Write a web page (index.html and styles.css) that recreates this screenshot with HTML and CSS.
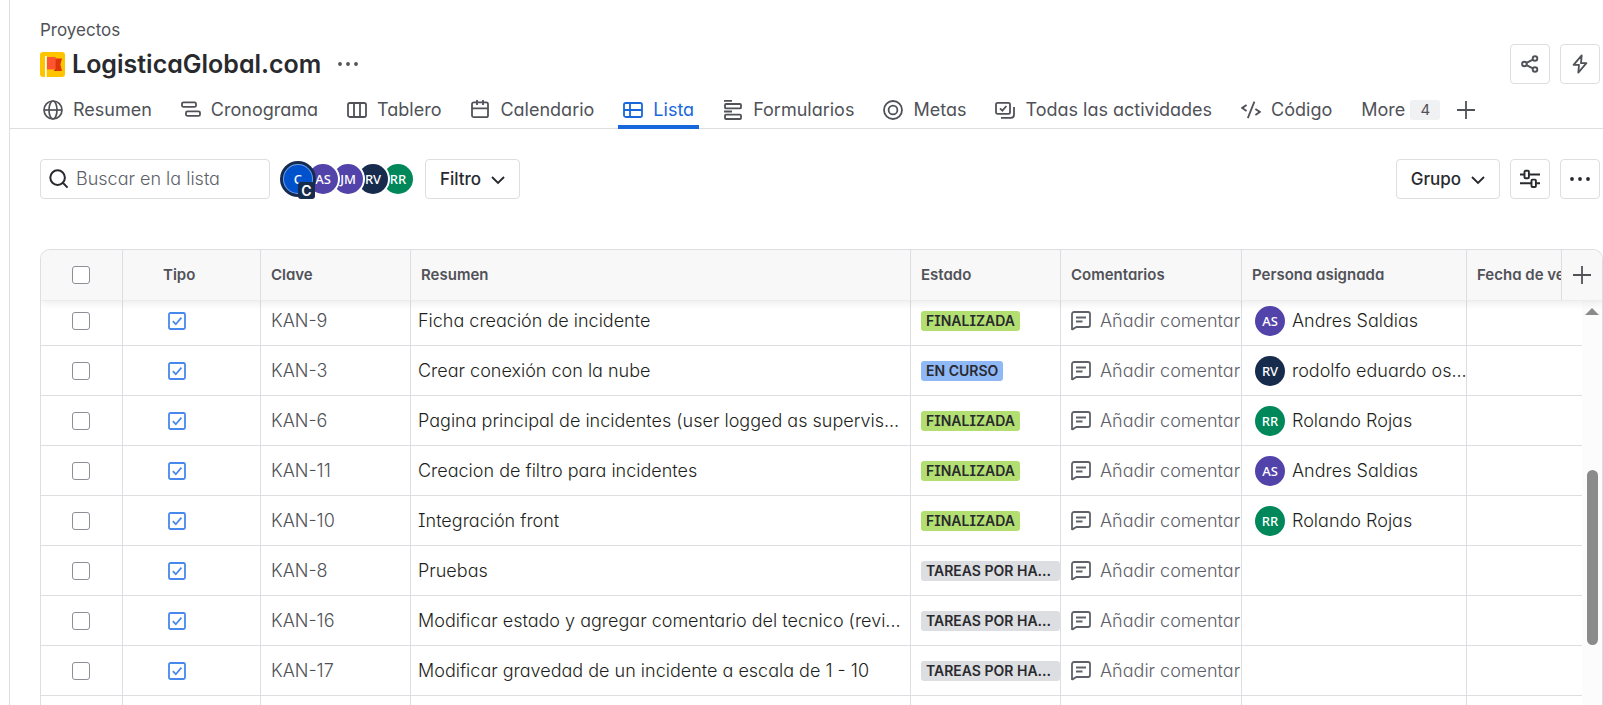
FILE: index.html
```html
<!DOCTYPE html>
<html lang="es">
<head>
<meta charset="utf-8">
<title>LogisticaGlobal.com - Lista</title>
<link rel="stylesheet" href="styles.css">
</head>
<body>
<svg class="sprite" aria-hidden="true">
  <symbol id="i-task" viewBox="0 0 18 18"><rect x="1" y="1" width="16" height="16" rx="1.5" fill="none" stroke="currentColor" stroke-width="1.8"/><path d="M4.8 9.2l3 3 5.6-6.6" fill="none" stroke="currentColor" stroke-width="1.7"/></symbol>
  <symbol id="i-comment" viewBox="0 0 20 20"><path d="M1 19V3a2 2 0 0 1 2-2h14a2 2 0 0 1 2 2v11a2 2 0 0 1-2 2H5.5L1 18.6zM5 6.5h10M5 10.5h6.5" fill="none" stroke="currentColor" stroke-width="1.8"/></symbol>
  <symbol id="i-plus" viewBox="0 0 20 20"><path d="M10 1v18M1 10h18" fill="none" stroke="currentColor" stroke-width="1.8"/></symbol>
  <symbol id="i-dots" viewBox="0 0 20 20"><g fill="currentColor"><circle cx="2" cy="10" r="1.9"/><circle cx="10" cy="10" r="1.9"/><circle cx="18" cy="10" r="1.9"/></g></symbol>
  <symbol id="i-chevron" viewBox="0 0 14 14"><path d="M1 5l6 6 6-6" fill="none" stroke="currentColor" stroke-width="1.9"/></symbol>
</svg>
<div class="edge"></div>
<main class="page">
  <header class="head">
    <a class="crumb" href="#">Proyectos</a>
    <div class="title-row">
      <svg class="logo" viewBox="0 0 25 25" aria-hidden="true"><rect width="25" height="25" rx="3" fill="#ffc400"/><path d="M5 4h1.7v21H5z" fill="#fff"/><path d="M15 6.5h7l-1.6 6 1.6 6.5h-7z" fill="#de350b"/><path d="M7 5h8.6v12.4H7z" fill="#ff5630"/><path d="M15.6 17.4L13.4 19h2.2z" fill="#bf2600"/></svg>
      <h1>LogisticaGlobal.com</h1>
      <button class="bare" aria-label="Más acciones"><svg class="ic"><use href="#i-dots"/></svg></button>
      <div class="actions">
        <button class="btn icon soft" aria-label="Compartir"><svg class="ic" viewBox="0 0 20 20"><g fill="none" stroke="currentColor" stroke-width="1.9"><circle cx="4.4" cy="10" r="2.3"/><circle cx="15" cy="4.5" r="2.3"/><circle cx="15" cy="15.5" r="2.3"/><path d="M6.5 8.9l6.4-3.3M6.5 11.1l6.4 3.3"/></g></svg></button>
        <button class="btn icon soft" aria-label="Automatización"><svg class="ic" viewBox="0 0 20 20"><path d="M11.7 1.3L3.6 10.8H9l-.7 7.9 8.1-9.5H11z" fill="none" stroke="currentColor" stroke-width="1.8" stroke-linejoin="round"/></svg></button>
      </div>
    </div>
  </header>
  <nav class="tabs">
    <a class="tab" href="#"><svg class="ic" viewBox="0 0 20 20"><g fill="none" stroke="currentColor" stroke-width="1.7"><circle cx="10" cy="10" r="9"/><ellipse cx="10" cy="10" rx="4" ry="9"/><path d="M1 10h18"/></g></svg>Resumen</a>
    <a class="tab" href="#"><svg class="ic" viewBox="0 0 20 20"><g fill="none" stroke="currentColor" stroke-width="1.8"><rect x="1" y="2.3" width="14" height="4.6" rx="1.5"/><rect x="5" y="11.3" width="14" height="4.6" rx="1.5"/></g></svg>Cronograma</a>
    <a class="tab" href="#"><svg class="ic" viewBox="0 0 20 20"><g fill="none" stroke="currentColor" stroke-width="1.8"><rect x="1" y="3" width="18" height="14" rx="1.8"/><path d="M7 3v14M13 3v14"/></g></svg>Tablero</a>
    <a class="tab" href="#"><svg class="ic" viewBox="0 0 20 20"><g fill="none" stroke="currentColor" stroke-width="1.8"><rect x="2" y="2.4" width="16" height="14.8" rx="1.8"/><path d="M2 8.3h16M7 0v5M13 0v5"/></g></svg>Calendario</a>
    <a class="tab active" href="#" aria-current="page"><svg class="ic" viewBox="0 0 20 20"><g fill="none" stroke="currentColor" stroke-width="1.8"><rect x="1" y="3" width="18" height="14" rx="1.8"/><path d="M7 3v14M1 10h18"/></g></svg>Lista</a>
    <a class="tab" href="#"><svg class="ic" viewBox="0 0 20 20"><g fill="none" stroke="currentColor" stroke-width="1.8"><rect x="2" y="4" width="16" height="4.4" rx="1"/><rect x="2" y="14.6" width="16" height="4.4" rx="1"/><path d="M1 .9h8M1 11.5h8"/></g></svg>Formularios</a>
    <a class="tab" href="#"><svg class="ic" viewBox="0 0 20 20"><g fill="none" stroke="currentColor" stroke-width="1.8"><circle cx="10" cy="10" r="9"/><circle cx="10" cy="10" r="4.4"/></g></svg>Metas</a>
    <a class="tab" href="#"><svg class="ic" viewBox="0 0 20 20"><g fill="none" stroke="currentColor" stroke-width="1.8"><rect x="1" y="2.9" width="14" height="11" rx="1.6"/><path d="M5 8.3l2.4 2.4L11.4 6M19 7v7.8a3 3 0 0 1-3 3H6"/></g></svg>Todas las actividades</a>
    <a class="tab" href="#"><svg class="ic" viewBox="0 0 20 20"><path d="M5.6 5L1.2 7.9l4.4 3M14.4 9l4.4 2.9-4.4 3M13.4 1.6L6.8 18.2" fill="none" stroke="currentColor" stroke-width="1.8"/></svg>Código</a>
    <button class="tab more">More <span class="count">4</span></button>
    <button class="bare add" aria-label="Añadir vista"><svg class="ic"><use href="#i-plus"/></svg></button>
  </nav>
  <section class="toolbar">
    <label class="search"><svg class="ic" viewBox="0 0 20 20"><g fill="none" stroke="currentColor" stroke-width="2"><circle cx="8.6" cy="8.6" r="7.3"/><path d="M13.8 13.8l4.8 4.8"/></g></svg><input type="text" placeholder="Buscar en la lista" aria-label="Buscar en la lista"></label>
    <div class="people">
      <button class="avatar blue selected">C<span class="mark">C</span></button>
      <button class="avatar purple">AS</button>
      <button class="avatar purple">JM</button>
      <button class="avatar navy">RV</button>
      <button class="avatar green">RR</button>
    </div>
    <button class="btn">Filtro <svg class="chev"><use href="#i-chevron"/></svg></button>
    <div class="actions">
      <button class="btn">Grupo <svg class="chev"><use href="#i-chevron"/></svg></button>
      <button class="btn icon" aria-label="Ajustes de vista"><svg class="ic" viewBox="0 0 20 20"><g fill="none" stroke="currentColor" stroke-width="1.9"><rect x="4.5" y="1.8" width="4.4" height="7.4" rx="1"/><rect x="11.5" y="10.6" width="4.4" height="7.4" rx="1"/><path d="M0 5.5h4M9.4 5.5H20M0 14.3h11M16.4 14.3H20"/></g></svg></button>
      <button class="btn icon" aria-label="Más opciones"><svg class="ic"><use href="#i-dots"/></svg></button>
    </div>
  </section>
  <section class="list">
    <table>
      <colgroup><col class="c-check"><col class="c-type"><col class="c-key"><col><col class="c-state"><col class="c-comment"><col class="c-person"><col class="c-date"><col class="c-add"></colgroup>
      <thead>
        <tr><th class="check"><input type="checkbox" aria-label="Seleccionar todo"></th><th class="type">Tipo</th><th>Clave</th><th>Resumen</th><th>Estado</th><th>Comentarios</th><th>Persona asignada</th><th>Fecha de ve</th><th class="new"><button class="bare" aria-label="Añadir columna"><svg class="ic"><use href="#i-plus"/></svg></button></th></tr>
      </thead>
      <tbody>
        <tr><td class="check"><input type="checkbox" aria-label="KAN-9"></td><td class="type"><svg class="task"><use href="#i-task"/></svg></td><td class="key">KAN-9</td><td class="sum">Ficha creación de incidente</td><td class="state"><span class="tag done">FINALIZADA</span></td><td class="note"><div><svg class="ic"><use href="#i-comment"/></svg>Añadir comentar</div></td><td class="who"><div><span class="avatar purple">AS</span><span class="name">Andres Saldias</span></div></td><td colspan="2"></td></tr>
        <tr><td class="check"><input type="checkbox" aria-label="KAN-3"></td><td class="type"><svg class="task"><use href="#i-task"/></svg></td><td class="key">KAN-3</td><td class="sum">Crear conexión con la nube</td><td class="state"><span class="tag doing">EN CURSO</span></td><td class="note"><div><svg class="ic"><use href="#i-comment"/></svg>Añadir comentar</div></td><td class="who"><div><span class="avatar navy">RV</span><span class="name">rodolfo eduardo os...</span></div></td><td colspan="2"></td></tr>
        <tr><td class="check"><input type="checkbox" aria-label="KAN-6"></td><td class="type"><svg class="task"><use href="#i-task"/></svg></td><td class="key">KAN-6</td><td class="sum">Pagina principal de incidentes (user logged as supervis...</td><td class="state"><span class="tag done">FINALIZADA</span></td><td class="note"><div><svg class="ic"><use href="#i-comment"/></svg>Añadir comentar</div></td><td class="who"><div><span class="avatar green">RR</span><span class="name">Rolando Rojas</span></div></td><td colspan="2"></td></tr>
        <tr><td class="check"><input type="checkbox" aria-label="KAN-11"></td><td class="type"><svg class="task"><use href="#i-task"/></svg></td><td class="key">KAN-11</td><td class="sum">Creacion de filtro para incidentes</td><td class="state"><span class="tag done">FINALIZADA</span></td><td class="note"><div><svg class="ic"><use href="#i-comment"/></svg>Añadir comentar</div></td><td class="who"><div><span class="avatar purple">AS</span><span class="name">Andres Saldias</span></div></td><td colspan="2"></td></tr>
        <tr><td class="check"><input type="checkbox" aria-label="KAN-10"></td><td class="type"><svg class="task"><use href="#i-task"/></svg></td><td class="key">KAN-10</td><td class="sum">Integración front</td><td class="state"><span class="tag done">FINALIZADA</span></td><td class="note"><div><svg class="ic"><use href="#i-comment"/></svg>Añadir comentar</div></td><td class="who"><div><span class="avatar green">RR</span><span class="name">Rolando Rojas</span></div></td><td colspan="2"></td></tr>
        <tr><td class="check"><input type="checkbox" aria-label="KAN-8"></td><td class="type"><svg class="task"><use href="#i-task"/></svg></td><td class="key">KAN-8</td><td class="sum">Pruebas</td><td class="state"><span class="tag todo">TAREAS POR HA...</span></td><td class="note"><div><svg class="ic"><use href="#i-comment"/></svg>Añadir comentar</div></td><td></td><td colspan="2"></td></tr>
        <tr><td class="check"><input type="checkbox" aria-label="KAN-16"></td><td class="type"><svg class="task"><use href="#i-task"/></svg></td><td class="key">KAN-16</td><td class="sum">Modificar estado y agregar comentario del tecnico (revi...</td><td class="state"><span class="tag todo">TAREAS POR HA...</span></td><td class="note"><div><svg class="ic"><use href="#i-comment"/></svg>Añadir comentar</div></td><td></td><td colspan="2"></td></tr>
        <tr><td class="check"><input type="checkbox" aria-label="KAN-17"></td><td class="type"><svg class="task"><use href="#i-task"/></svg></td><td class="key">KAN-17</td><td class="sum">Modificar gravedad de un incidente a escala de 1 - 10</td><td class="state"><span class="tag todo">TAREAS POR HA...</span></td><td class="note"><div><svg class="ic"><use href="#i-comment"/></svg>Añadir comentar</div></td><td></td><td colspan="2"></td></tr>
        <tr><td></td><td></td><td></td><td></td><td></td><td></td><td></td><td colspan="2"></td></tr>
      </tbody>
    </table>
    <div class="scrollbar" aria-hidden="true"><svg class="arrow" viewBox="0 0 14 7"><path d="M7 0l7 7H0z" fill="#8b8b8b"/></svg><div class="thumb"></div></div>
  </section>
</main>
</body>
</html>
```
FILE: styles.css
```css
* { box-sizing: border-box; }

body {
  margin: 0;
  height: 100vh;
  overflow: hidden;
  display: flex;
  background: #fff;
  color: #292a2e;
  font-family: Inter, "Liberation Sans", sans-serif;
  font-feature-settings: "cv11", "cv08";
  font-size: 17px;
  line-height: 24px;
}

button, input {
  font: inherit;
  font-feature-settings: inherit;
  color: inherit;
  margin: 0;
}

button { background: none; border: 0; padding: 0; }
a { color: inherit; text-decoration: none; }
svg { display: block; flex: none; }
.sprite { position: absolute; width: 0; height: 0; }
.ic { width: 20px; height: 20px; }
.chev { width: 14px; height: 14px; }

.edge { flex: 0 0 10px; border-right: 1px solid #dddee1; }
.page { flex: 1; min-width: 0; display: flex; flex-direction: column; }

.head { padding: 18px 3px 0 30px; color: #505258; }
.crumb { display: block; }
.title-row { display: flex; align-items: center; margin-top: 2px; }
.logo { width: 25px; height: 25px; }
h1 { margin: 0 17px 0 7px; font-size: 25px; line-height: 32px; font-weight: 600; color: #292a2e; }
.bare { display: grid; place-items: center; color: #505258; }
.actions { margin-left: auto; display: flex; gap: 10px; }

.btn {
  height: 40px;
  padding: 0 14px;
  display: flex;
  align-items: center;
  gap: 10px;
  border: 1px solid #dddee1;
  border-radius: 4px;
  font-weight: 500;
}
.btn.icon { width: 40px; padding: 0; justify-content: center; }
.btn.soft { color: #505258; }

.tabs {
  display: flex;
  gap: 19px;
  margin-top: 7px;
  padding-left: 28px;
  height: 38px;
  box-shadow: inset 0 -1px #dddee1;
  color: #505258;
  font-size: 18px;
  white-space: nowrap;
}
.tab { position: relative; display: flex; align-items: center; gap: 10px; padding: 0 5px; height: 38px; }
.tab.active { color: #1868db; }
.tab.active::after { content: ""; position: absolute; left: 0; right: 0; bottom: 0; height: 4px; background: #1868db; }
.more { gap: 5px; }
.count { width: 30px; height: 20px; border-radius: 3px; background: #f0f1f2; font-size: 15px; line-height: 20px; text-align: center; }
.add { margin-left: -8px; }

.toolbar { display: flex; align-items: center; padding: 30px 3px 0 30px; }
.search {
  display: flex;
  align-items: center;
  gap: 7px;
  width: 230px;
  height: 40px;
  padding: 0 8px;
  border: 1px solid #dddee1;
  border-radius: 4px;
  font-size: 18px;
  font-weight: 300;
}
.search input { flex: 1; min-width: 0; border: 0; padding: 0; outline: 0; background: none; }
.search input::placeholder { color: #5e6168; opacity: 1; }

.people { display: flex; margin: 0 12px 0 13px; }
.avatar {
  flex: none;
  width: 30px;
  height: 30px;
  border-radius: 50%;
  display: grid;
  place-items: center;
  color: #fff;
  font: 500 13px/30px "Noto Sans", sans-serif;
}
.people .avatar + .avatar { margin-left: -5px; }
.people .avatar { position: relative; box-shadow: 0 0 0 2px #fff; }
.people .avatar:nth-child(1) { z-index: 5; }
.people .avatar:nth-child(2) { z-index: 4; }
.people .avatar:nth-child(3) { z-index: 3; }
.people .avatar:nth-child(4) { z-index: 2; }
.people .avatar.selected { box-shadow: inset 0 0 0 1px #6f9be8, 0 0 0 3px #172b4d; }
.mark {
  position: absolute;
  right: -2px;
  bottom: -5px;
  width: 17px;
  height: 17px;
  border-radius: 3px;
  background: #172b4d;
  font: 600 14px/17px Inter, sans-serif;
}
.blue { background: #0052cc; }
.purple { background: #5243aa; }
.navy { background: #172b4d; }
.green { background: #00875a; }

.list {
  position: relative;
  flex: 1;
  min-height: 0;
  overflow: hidden;
  margin: 50px 0 0 30px;
  border: 1px solid #dddee1;
  border-bottom: 0;
  border-radius: 10px 10px 0 0;
}
table { width: 100%; table-layout: fixed; border-collapse: separate; border-spacing: 0; }
.c-check { width: 82px; }
.c-type { width: 138px; }
.c-key, .c-state { width: 150px; }
.c-comment { width: 181px; }
.c-person { width: 225px; }
.c-date { width: 95px; }
.c-add { width: 40px; }

th, td {
  padding: 0 0 0 10px;
  border-right: 1px solid #dddee1;
  border-bottom: 1px solid #dddee1;
  overflow: hidden;
  white-space: nowrap;
  text-align: left;
  vertical-align: middle;
}
th:last-child, td:last-child { border-right: 0; }
thead { position: relative; z-index: 2; box-shadow: 0 2px 8px rgba(30, 31, 33, .09); }
th { height: 51px; background: #f8f8f8; color: #505258; font-size: 15px; font-weight: 600; border-bottom-color: #ebecee; }
td { height: 50px; font-size: 18px; font-weight: 300; }
tbody tr:first-child td { height: 45px; padding-bottom: 4px; }
th.new { padding: 0; }
.new .bare { width: 40px; height: 40px; }
th.check, td.check { padding-left: 31px; }
.check input {
  appearance: none;
  display: block;
  width: 18px;
  height: 18px;
  border: 1px solid #8c8f97;
  border-radius: 3px;
  background: #fff;
}
th.type { padding-left: 40px; }
td.type { padding-left: 45px; color: #4688ec; }
.task { width: 18px; height: 18px; }
.key { color: #505258; }
td.sum { padding-left: 7px; color: #1e1f21; text-overflow: ellipsis; }
.tag {
  display: block;
  width: fit-content;
  max-width: 100%;
  padding: 0 5px;
  border-radius: 3px;
  overflow: hidden;
  text-overflow: ellipsis;
  font-size: 14px;
  line-height: 20px;
  font-weight: 600;
}
.done { background: #b3df72; }
.doing { background: #8fb8f6; }
.todo { width: auto; background: #dddee1; }
.note { color: #5e6168; }
.note div { display: flex; align-items: center; gap: 9px; }
td.who { padding-left: 13px; color: #1e1f21; }
.who div { display: flex; align-items: center; gap: 7px; }
.name { min-width: 0; }

.scrollbar {
  position: absolute;
  top: 51px;
  right: 0;
  bottom: 0;
  width: 20px;
  padding: 7px 3px 0;
  background: #fcfcfc;
}
.arrow { width: 14px; height: 7px; }
.thumb { width: 11px; height: 175px; margin: 155px auto 0; border-radius: 6px; background: #8b8b8b; }
```
